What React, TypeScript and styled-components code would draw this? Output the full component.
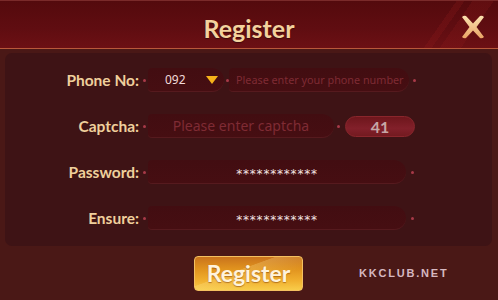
import React from "react";
import styled, { createGlobalStyle } from "styled-components";

const Global = createGlobalStyle`
  html, body { margin: 0; padding: 0; }
  body {
    width: 498px; height: 300px; overflow: hidden;
    background: #4a1816;
    font-family: "Lato", "Open Sans", sans-serif;
  }
`;

const Frame = styled.div`
  width: 498px; height: 300px;
  display: flex; flex-direction: column;
  background: #4a1816;
  box-sizing: border-box;
`;

const Header = styled.header`
  height: 47px;
  display: grid;
  grid-template-columns: 1fr auto 1fr;
  align-items: center;
  border-top: 1px solid #7a2a2a;
  border-bottom: 1px solid #b8583a;
  background:
    linear-gradient(125deg, transparent 86%, rgba(150, 28, 28, 0.22) 86%, rgba(150, 28, 28, 0.22) 87.5%, transparent 87.5%, transparent 89%, rgba(150, 28, 28, 0.2) 89%, rgba(150,28,28,0.2) 93%, transparent 93%),
    linear-gradient(180deg, #540a0d 0%, #600d11 60%, #6c1014 100%);
`;

const Title = styled.h1`
  grid-column: 2;
  margin: 0;
  font-family: "Lato", sans-serif;
  font-weight: 700;
  font-size: 25px;
  color: #f3d29e;
  padding-top: 6px;
  text-shadow: 0 1px 1px rgba(0,0,0,0.4);
`;

const Close = styled.button`
  grid-column: 3;
  justify-self: end;
  margin-right: 12px;
  margin-top: 4px;
  width: 26px; height: 26px;
  padding: 0; border: 0; background: none;
  display: flex;
`;

const Panel = styled.section`
  margin: 4px 6px 0 5px;
  height: 193px;
  box-sizing: border-box;
  padding-top: 15px;
  border-radius: 7px;
  background: #3e1315;
  display: flex; flex-direction: column; gap: 22px;
`;

const Row = styled.div`
  display: flex; align-items: center;
  height: 24px;
`;

const Label = styled.label`
  width: 134px;
  text-align: right;
  font-family: "Lato", sans-serif;
  font-weight: 700;
  font-size: 15.5px;
  color: #efcf9c;
  flex: none;
`;

const Dot = styled.span<{ $l?: number; $r?: number }>`
  width: 3px; height: 3px; border-radius: 50%;
  background: #a83a48;
  flex: none;
  margin: 0 ${(p) => p.$r ?? 2}px 0 ${(p) => p.$l ?? 4}px;
`;

const Field = styled.div<{ $w: number; $center?: boolean }>`
  width: ${(p) => p.$w}px;
  height: 24px;
  flex: none;
  box-sizing: border-box;
  border-radius: 4px 12px 12px 4px;
  background: linear-gradient(180deg, #420d11 0%, #460e12 100%);
  border-bottom: 1px solid #561a1e;
  display: flex; align-items: center;
  justify-content: ${(p) => (p.$center ? "center" : "flex-start")};
`;

const Code = styled.span`
  font-family: "Noto Sans", sans-serif;
  font-size: 12px;
  color: #f2dada;
  margin-left: 17px;
`;

const Caret = styled.span`
  margin-left: 20px;
  width: 0; height: 0;
  border-left: 6px solid transparent;
  border-right: 6px solid transparent;
  border-top: 8px solid #f6b21a;
`;

const Placeholder = styled.span<{ $size: number }>`
  font-family: "Noto Sans", sans-serif;
  font-size: ${(p) => p.$size}px;
  color: #7f2b34;
  white-space: nowrap;
  margin-left: ${(p) => (p.$size < 12 ? 7 : 0)}px;
`;

const Stars = styled.span`
  font-family: "DejaVu Sans", sans-serif;
  font-size: 12px;
  color: #f4e4e4;
  letter-spacing: 0.8px;
  padding-top: 4px;
`;

const CaptchaBox = styled.div`
  width: 70px; height: 21px;
  box-sizing: border-box;
  border-radius: 11px;
  margin-left: 5px;
  border: 1px solid #8a262c;
  background: linear-gradient(180deg, #6e161c 0%, #82202a 60%, #731a20 100%);
  display: flex; align-items: center; justify-content: center;
  font-family: "Lato", sans-serif;
  font-weight: 700;
  font-size: 16px;
  color: #c6a6a6;
`;

const Footer = styled.footer`
  flex: 1;
  display: grid;
  grid-template-columns: 194px 109px 1fr;
  align-items: center;
  padding-bottom: 4px;
`;

const RegisterButton = styled.button`
  grid-column: 2;
  height: 35px;
  margin-top: 4px;
  border-radius: 4px;
  border: 1px solid #f4c060;
  background:
    linear-gradient(160deg, rgba(255,255,255,0.0) 40%, rgba(255,230,150,0.25) 41%, rgba(255,255,255,0) 70%),
    linear-gradient(180deg, #c9731c 0%, #e0921e 35%, #f0ae2e 70%, #f8cc4a 100%);
  font-family: "Lato", sans-serif;
  font-weight: 700;
  font-size: 23px;
  color: #fff3dc;
  padding: 0;
  text-shadow: 0 1px 1px rgba(120, 50, 0, 0.5);
`;

const Brand = styled.span`
  margin-left: 56px;
  margin-top: 4px;
  font-family: "Liberation Sans", sans-serif;
  font-weight: 700;
  font-size: 11px;
  letter-spacing: 1.8px;
  color: #d6b8c0;
`;

function CloseIcon() {
  return (
    <svg width="26" height="26" viewBox="0 0 26 26">
      <defs>
        <linearGradient id="xg" x1="0" y1="0" x2="0" y2="1">
          <stop offset="0" stopColor="#fbe2b0" />
          <stop offset="1" stopColor="#e9a465" />
        </linearGradient>
      </defs>
      <path
        d="M2 3 Q4 1 6 2 L13 9.5 L20 2 Q22 1 24 3 L16.5 13 L24 23 Q22 25 20 24 L13 16.5 L6 24 Q4 25 2 23 L9.5 13 Z"
        fill="url(#xg)"
      />
    </svg>
  );
}

export default function App() {
  return (
    <>
      <Global />
      <Frame>
        <Header>
          <Title>Register</Title>
          <Close aria-label="close">
            <CloseIcon />
          </Close>
        </Header>
        <Panel>
          <Row>
            <Label>Phone No:</Label>
            <Dot $l={4} $r={2} />
            <Field $w={76}>
              <Code>092</Code>
              <Caret />
            </Field>
            <Dot $l={2} $r={0} />
            <Field $w={180}>
              <Placeholder $size={10.8}>Please enter your phone number</Placeholder>
            </Field>
            <Dot $l={4} $r={0} />
          </Row>
          <Row>
            <Label>Captcha:</Label>
            <Dot $l={4} $r={2} />
            <Field $w={186} $center>
              <Placeholder $size={14}>Please enter captcha</Placeholder>
            </Field>
            <Dot $l={3} $r={0} />
            <CaptchaBox>41</CaptchaBox>
          </Row>
          <Row>
            <Label>Password:</Label>
            <Dot $l={4} $r={2} />
            <Field $w={258} $center>
              <Stars>************</Stars>
            </Field>
            <Dot $l={5} $r={0} />
          </Row>
          <Row>
            <Label>Ensure:</Label>
            <Dot $l={4} $r={2} />
            <Field $w={258} $center>
              <Stars>************</Stars>
            </Field>
            <Dot $l={5} $r={0} />
          </Row>
        </Panel>
        <Footer>
          <RegisterButton>Register</RegisterButton>
          <Brand>KKCLUB.NET</Brand>
        </Footer>
      </Frame>
    </>
  );
}
